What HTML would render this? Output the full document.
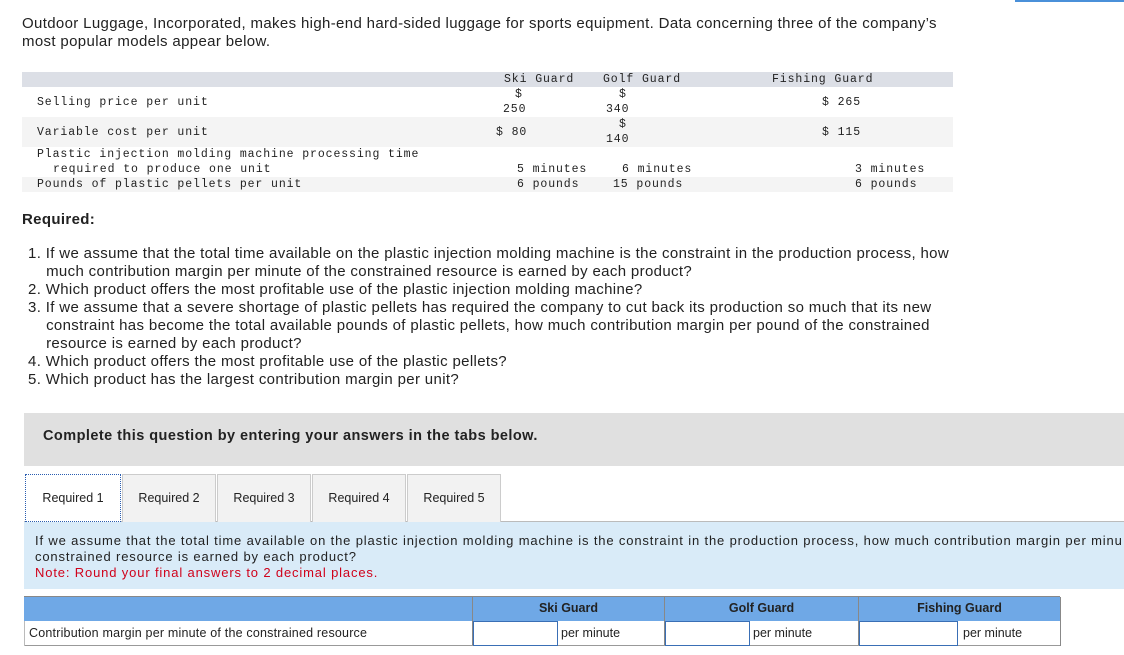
<!DOCTYPE html>
<html><head><meta charset="utf-8"><style>
body{margin:0;width:1124px;height:655px;overflow:hidden;background:#fff;font-family:"Liberation Sans",sans-serif;color:#222;position:relative}
.a{position:absolute;white-space:nowrap}
.m{font-family:"Liberation Mono",monospace;font-size:11.5px;color:#222;letter-spacing:0.9px}
.p{font-size:15px;line-height:18px;letter-spacing:0.35px}
.s{font-size:12.5px}
</style></head><body>
<div class="a" style="left:1015px;top:0;width:109px;height:2px;background:#4a90d9"></div>
<div class="a p" style="left:22px;top:15px">Outdoor Luggage, Incorporated, makes high-end hard-sided luggage for sports equipment. Data concerning three of the company’s<br>most popular models appear below.</div>

<div class="a" style="left:22px;top:72px;width:931px;height:15px;background:#dcdfe6"></div>
<div class="a" style="left:22px;top:117px;width:931px;height:30px;background:#f4f4f4"></div>
<div class="a" style="left:22px;top:177px;width:931px;height:15px;background:#f4f4f4"></div>
<div class="a m" style="left:504px;top:73px">Ski Guard</div>
<div class="a m" style="left:603px;top:73px">Golf Guard</div>
<div class="a m" style="left:772px;top:73px">Fishing Guard</div>
<div class="a m" style="left:37px;top:96px">Selling price per unit</div>
<div class="a m" style="left:515px;top:88px">$</div><div class="a m" style="left:503px;top:103px">250</div>
<div class="a m" style="left:619px;top:88px">$</div><div class="a m" style="left:606px;top:103px">340</div>
<div class="a m" style="left:822px;top:96px">$ 265</div>
<div class="a m" style="left:37px;top:126px">Variable cost per unit</div>
<div class="a m" style="left:496px;top:126px">$ 80</div>
<div class="a m" style="left:619px;top:118px">$</div><div class="a m" style="left:606px;top:133px">140</div>
<div class="a m" style="left:822px;top:126px">$ 115</div>
<div class="a m" style="left:37px;top:148px">Plastic injection molding machine processing time</div>
<div class="a m" style="left:53px;top:163px">required to produce one unit</div>
<div class="a m" style="left:517px;top:163px">5 minutes</div>
<div class="a m" style="left:622px;top:163px">6 minutes</div>
<div class="a m" style="left:855px;top:163px">3 minutes</div>
<div class="a m" style="left:37px;top:178px">Pounds of plastic pellets per unit</div>
<div class="a m" style="left:517px;top:178px">6 pounds</div>
<div class="a m" style="left:613px;top:178px">15 pounds</div>
<div class="a m" style="left:855px;top:178px">6 pounds</div>

<div class="a p" style="left:22px;top:211px;font-weight:bold">Required:</div>
<div class="a p" style="left:28px;top:245px">1. If we assume that the total time available on the plastic injection molding machine is the constraint in the production process, how<br>&nbsp;&nbsp;&nbsp;&nbsp;much contribution margin per minute of the constrained resource is earned by each product?<br>2. Which product offers the most profitable use of the plastic injection molding machine?<br>3. If we assume that a severe shortage of plastic pellets has required the company to cut back its production so much that its new<br>&nbsp;&nbsp;&nbsp;&nbsp;constraint has become the total available pounds of plastic pellets, how much contribution margin per pound of the constrained<br>&nbsp;&nbsp;&nbsp;&nbsp;resource is earned by each product?<br>4. Which product offers the most profitable use of the plastic pellets?<br>5. Which product has the largest contribution margin per unit?</div>

<div class="a" style="left:24px;top:413px;width:1100px;height:53px;background:#e0e0e0"></div>
<div class="a" style="left:43px;top:428px;font-size:14.5px;letter-spacing:0.45px;font-weight:bold">Complete this question by entering your answers in the tabs below.</div>

<div class="a" style="left:24px;top:521px;width:1100px;height:1px;background:#bbb"></div>
<div class="a s" style="left:25px;top:474px;width:94px;height:46px;border:1px dotted #2a5db0;background:#fff;line-height:46px;text-align:center">Required 1</div>
<div class="a s" style="left:122px;top:474px;width:92px;height:47px;border:1px solid #ccc;border-bottom:none;background:#f2f2f2;line-height:47px;text-align:center">Required 2</div>
<div class="a s" style="left:217px;top:474px;width:92px;height:47px;border:1px solid #ccc;border-bottom:none;background:#f2f2f2;line-height:47px;text-align:center">Required 3</div>
<div class="a s" style="left:312px;top:474px;width:92px;height:47px;border:1px solid #ccc;border-bottom:none;background:#f2f2f2;line-height:47px;text-align:center">Required 4</div>
<div class="a s" style="left:407px;top:474px;width:92px;height:47px;border:1px solid #ccc;border-bottom:none;background:#f2f2f2;line-height:47px;text-align:center">Required 5</div>

<div class="a" style="left:24px;top:522px;width:1100px;height:67px;background:#d9ebf8"></div>
<div class="a s" style="left:35px;top:533px;line-height:16px;font-size:13px;letter-spacing:0.85px">If we assume that the total time available on the plastic injection molding machine is the constraint in the production process, how much contribution margin per minu<br>constrained resource is earned by each product?<br><span style="color:#d0021b">Note: Round your final answers to 2 decimal places.</span></div>

<div class="a" style="left:24px;top:596px;width:1036px;height:24px;background:#6fa8e6;border-top:1px solid #888"></div>
<div class="a" style="left:472px;top:597px;width:1px;height:48px;background:#888"></div>
<div class="a" style="left:664px;top:597px;width:1px;height:48px;background:#888"></div>
<div class="a" style="left:858px;top:597px;width:1px;height:48px;background:#888"></div>
<div class="a s" style="left:473px;top:601px;width:191px;text-align:center;font-weight:bold">Ski Guard</div>
<div class="a s" style="left:665px;top:601px;width:193px;text-align:center;font-weight:bold">Golf Guard</div>
<div class="a s" style="left:859px;top:601px;width:201px;text-align:center;font-weight:bold">Fishing Guard</div>
<div class="a" style="left:24px;top:621px;width:1036px;height:24px;border-bottom:1px solid #999"></div>
<div class="a" style="left:1060px;top:597px;width:1px;height:49px;background:#888"></div>
<div class="a" style="left:24px;top:621px;width:1px;height:25px;background:#bbb"></div>
<div class="a s" style="left:29px;top:626px;letter-spacing:0.2px">Contribution margin per minute of the constrained resource</div>
<div class="a" style="left:473px;top:621px;width:83px;height:23px;border:1px solid #3a6fb5"></div>
<div class="a s" style="left:561px;top:626px">per minute</div>
<div class="a" style="left:665px;top:621px;width:83px;height:23px;border:1px solid #3a6fb5"></div>
<div class="a s" style="left:753px;top:626px">per minute</div>
<div class="a" style="left:859px;top:621px;width:97px;height:23px;border:1px solid #3a6fb5"></div>
<div class="a s" style="left:963px;top:626px">per minute</div>
</body></html>
